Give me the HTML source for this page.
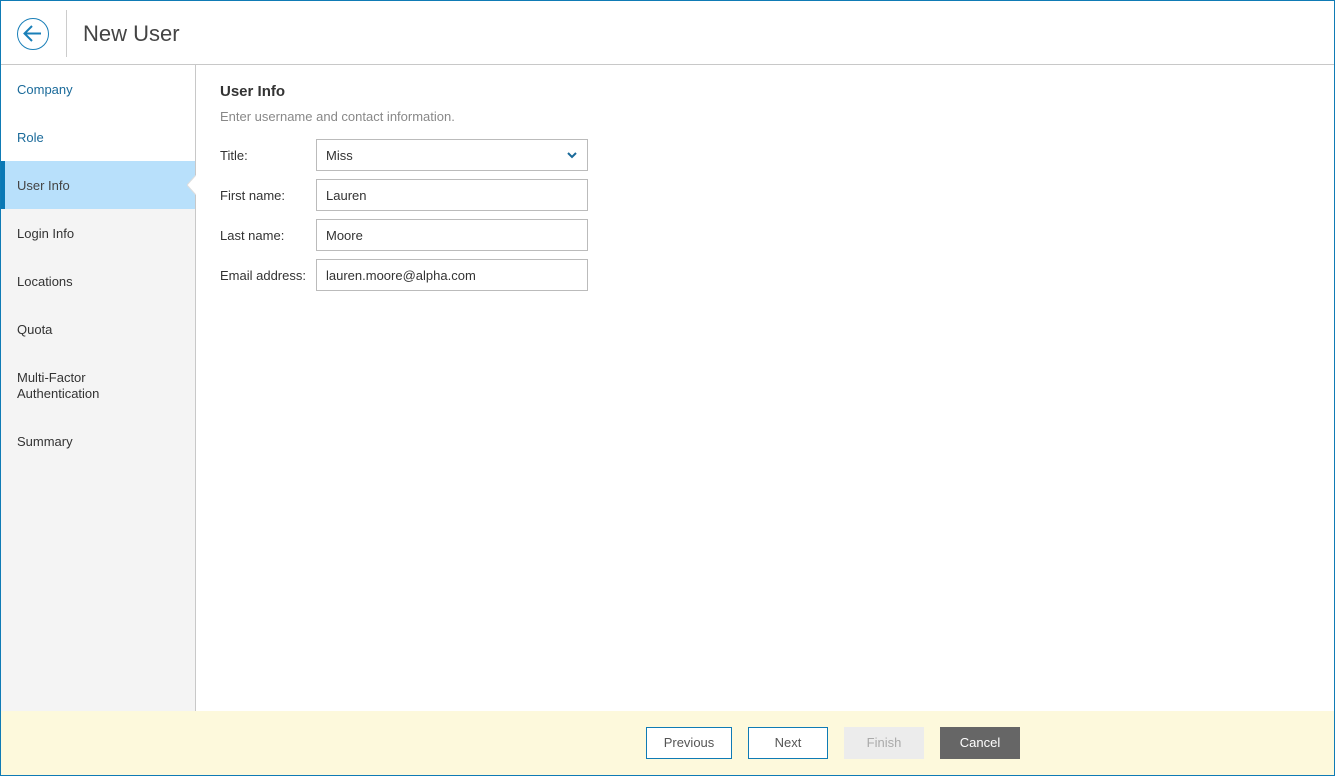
<!DOCTYPE html>
<html><head><style>
*{box-sizing:border-box;margin:0;padding:0}
body{width:1335px;height:776px;font-family:"Liberation Sans",sans-serif;font-size:13px;color:#444;background:#fff;position:relative;overflow:hidden}
.frame{position:absolute;inset:0;border:1px solid #0f7bb5}
.hdr{position:absolute;left:1px;top:1px;right:1px;height:64px;border-bottom:1px solid #c8c8c8;background:#fff}
.back{position:absolute;left:16px;top:17px;width:32px;height:32px;border:1.5px solid #1a7fb8;border-radius:50%}
.sep{position:absolute;left:65px;top:9px;width:1px;height:47px;background:#ccc}
.title{position:absolute;left:82px;top:20px;font-size:22px;color:#444}
.side{position:absolute;left:1px;top:65px;width:195px;bottom:65px;background:#f4f4f4;border-right:1px solid #c8c8c8}
.item{position:absolute;left:0;width:194px;height:48px;padding-left:16px;line-height:50px;color:#1a6a9a}
.act{background:#b8e0fb;color:#444}
.gray{color:#333}
h2{font-size:15px;font-weight:bold;color:#333;position:absolute;left:220px;top:83px}
.sub{position:absolute;left:220px;top:109px;color:#888}
.lbl{position:absolute;left:220px;color:#333}
.inp{position:absolute;left:316px;width:272px;height:32px;border:1px solid #bbb;padding-left:9px;line-height:32px;color:#333}
.foot{position:absolute;left:1px;right:1px;top:711px;bottom:1px;background:#fdf9dc}
.btn{position:absolute;top:727px;height:32px;line-height:32px;text-align:center;font-size:13px}
</style></head><body>
<div class="hdr">
<div class="back"><svg width="29" height="29" viewBox="0 0 29 29" style="position:absolute;left:0;top:0"><path d="M23 14.5H6.5M14 7l-7.5 7.5 7.5 7.5" fill="none" stroke="#1a7fb8" stroke-width="2"/></svg></div>
<div class="sep"></div>
<div class="title">New User</div>
</div>
<div class="side">
<div class="item" style="top:0;background:#fff">Company</div>
<div class="item" style="top:48px;background:#fff">Role</div>
<div class="item act" style="top:96px;border-left:4px solid #0a78b5;padding-left:12px">User Info</div>
<svg style="position:absolute;left:186px;top:110px" width="9" height="20"><path d="M9 0L0 10L9 20Z" fill="#fff"/><path d="M9 0L0 10L9 20" fill="none" stroke="#ddd"/></svg>
<div class="item gray" style="top:144px">Login Info</div>
<div class="item gray" style="top:192px">Locations</div>
<div class="item gray" style="top:240px">Quota</div>
<div class="item gray" style="line-height:16px;top:305px">Multi-Factor<br>Authentication</div>
<div class="item gray" style="top:352px">Summary</div>
</div>
<h2>User Info</h2>
<div class="sub">Enter username and contact information.</div>
<div class="lbl" style="top:148px">Title:</div>
<div class="inp" style="top:139px">Miss<svg style="position:absolute;right:10px;top:12px" width="10" height="7"><path d="M1 1l4 4 4-4" fill="none" stroke="#1a6a9a" stroke-width="2"/></svg></div>
<div class="lbl" style="top:188px">First name:</div>
<div class="inp" style="top:179px">Lauren</div>
<div class="lbl" style="top:228px">Last name:</div>
<div class="inp" style="top:219px">Moore</div>
<div class="lbl" style="top:268px">Email address:</div>
<div class="inp" style="top:259px">lauren.moore@alpha.com</div>
<div class="foot"></div>
<div class="btn" style="left:646px;width:86px;border:1px solid #0f7bb5;background:#fff;color:#555;line-height:30px">Previous</div>
<div class="btn" style="left:748px;width:80px;border:1px solid #0f7bb5;background:#fff;color:#555;line-height:30px">Next</div>
<div class="btn" style="left:844px;width:80px;background:#ececec;color:#aaa">Finish</div>
<div class="btn" style="left:940px;width:80px;background:#666;color:#fff">Cancel</div>
<div class="frame"></div>
</body></html>
